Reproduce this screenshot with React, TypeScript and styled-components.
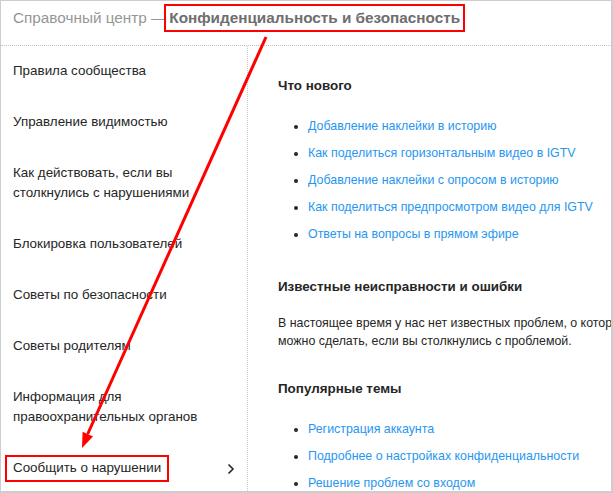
import styled, { createGlobalStyle } from 'styled-components';

const GlobalStyle = createGlobalStyle`
  html, body {
    margin: 0;
    padding: 0;
    background: #ffffff;
  }
  * {
    box-sizing: border-box;
  }
`;

const Frame = styled.div`
  position: relative;
  width: 613px;
  height: 493px;
  display: flex;
  flex-direction: column;
  border-style: solid;
  border-color: #cdcdcd;
  border-width: 1px 2px 2px 1px;
  overflow: hidden;
  font-family: 'Liberation Sans', Arial, sans-serif;
  background: #ffffff;
`;

const Header = styled.header`
  height: 45px;
  flex-shrink: 0;
  padding: 7px 12px 0;
  border-bottom: 1px dotted #c4c4c4;
  font-size: 15.3px;
  line-height: 20px;
  color: #969696;
  white-space: nowrap;
`;

const Current = styled.span`
  font-weight: bold;
  color: #6e6e6e;
  margin-left: -2px;
  padding: 3px 3px 4px;
  border: 2px solid #ff0000;
`;

const Body = styled.div`
  flex: 1;
  display: flex;
  min-height: 0;
`;

const Sidebar = styled.nav`
  width: 247px;
  flex-shrink: 0;
  border-right: 1px dotted #c8c8c8;
  display: flex;
  flex-direction: column;
`;

const NavItem = styled.div`
  display: flex;
  align-items: center;
  justify-content: space-between;
  padding: 15px 12px 16px 12px;
  font-size: 13.4px;
  line-height: 20px;
  color: #262626;
`;

const LastItem = styled(NavItem)`
  padding-top: 12px;
`;

const NavLabel = styled.span<{ $marked?: boolean }>`
  ${(p) =>
    p.$marked &&
    `
    margin-left: -8px;
    padding: 1px 6px 2px;
    border: 2px solid #ff0000;
  `}
`;

const Main = styled.main`
  flex: 1;
  padding: 30px 0 0 30px;
  min-width: 0;
`;

const Section = styled.section`
  margin-bottom: 29px;
`;

const Heading = styled.h3`
  margin: 0 0 17px;
  font-size: 13.4px;
  line-height: 20px;
  font-weight: bold;
  color: #262626;
`;

const List = styled.ul`
  margin: 0;
  padding: 0 0 0 30px;
  list-style: disc;
  color: #262626;
`;

const Item = styled.li`
  padding: 3px 0 4px;
  font-size: 12.4px;
  line-height: 20px;
  white-space: nowrap;
`;

const Link = styled.a`
  color: #2796f0;
  text-decoration: none;
`;

const Text = styled.p`
  margin: 0;
  font-size: 12.4px;
  line-height: 18px;
  color: #262626;
  white-space: nowrap;
`;

const Overlay = styled.svg`
  position: absolute;
  left: -1px;
  top: -1px;
  pointer-events: none;
`;

const Chevron = () => (
  <svg width="8" height="12" viewBox="0 0 8 12">
    <polyline points="1.5,1.5 6,6 1.5,10.5" fill="none" stroke="#262626" strokeWidth="1.6" />
  </svg>
);

const navItems = [
  ['Правила сообщества'],
  ['Управление видимостью'],
  ['Как действовать, если вы', 'столкнулись с нарушениями'],
  ['Блокировка пользователей'],
  ['Советы по безопасности'],
  ['Советы родителям'],
  ['Информация для', 'правоохранительных органов'],
];

const whatsNew = [
  'Добавление наклейки в историю',
  'Как поделиться горизонтальным видео в IGTV',
  'Добавление наклейки с опросом в историю',
  'Как поделиться предпросмотром видео для IGTV',
  'Ответы на вопросы в прямом эфире',
];

const popular = [
  'Регистрация аккаунта',
  'Подробнее о настройках конфиденциальности',
  'Решение проблем со входом',
];

export default function App() {
  return (
    <>
      <GlobalStyle />
      <Frame>
        <Header>
          Справочный центр —<Current>Конфиденциальность и безопасность</Current>
        </Header>
        <Body>
          <Sidebar>
            {navItems.map((lines) => (
              <NavItem key={lines[0]}>
                <NavLabel>
                  {lines.map((line, i) => (
                    <span key={line}>
                      {i > 0 && <br />}
                      {line}
                    </span>
                  ))}
                </NavLabel>
              </NavItem>
            ))}
            <LastItem>
              <NavLabel $marked>Сообщить о нарушении</NavLabel>
              <Chevron />
            </LastItem>
          </Sidebar>
          <Main>
            <Section>
              <Heading>Что нового</Heading>
              <List>
                {whatsNew.map((t) => (
                  <Item key={t}>
                    <Link href="#">{t}</Link>
                  </Item>
                ))}
              </List>
            </Section>
            <Section>
              <Heading>Известные неисправности и ошибки</Heading>
              <Text>
                В настоящее время у нас нет известных проблем, о которых стоит сообщить. Узнайте, что
                <br />
                можно сделать, если вы столкнулись с проблемой.
              </Text>
            </Section>
            <Section>
              <Heading>Популярные темы</Heading>
              <List>
                {popular.map((t) => (
                  <Item key={t}>
                    <Link href="#">{t}</Link>
                  </Item>
                ))}
              </List>
            </Section>
          </Main>
        </Body>
        <Overlay width="613" height="493" viewBox="0 0 613 493">
          <line x1="266" y1="37" x2="87.7" y2="434" stroke="#ff0000" strokeWidth="3" />
          <polygon points="82,448 93,436.5 82.6,431.8" fill="#ff0000" />
        </Overlay>
      </Frame>
    </>
  );
}
